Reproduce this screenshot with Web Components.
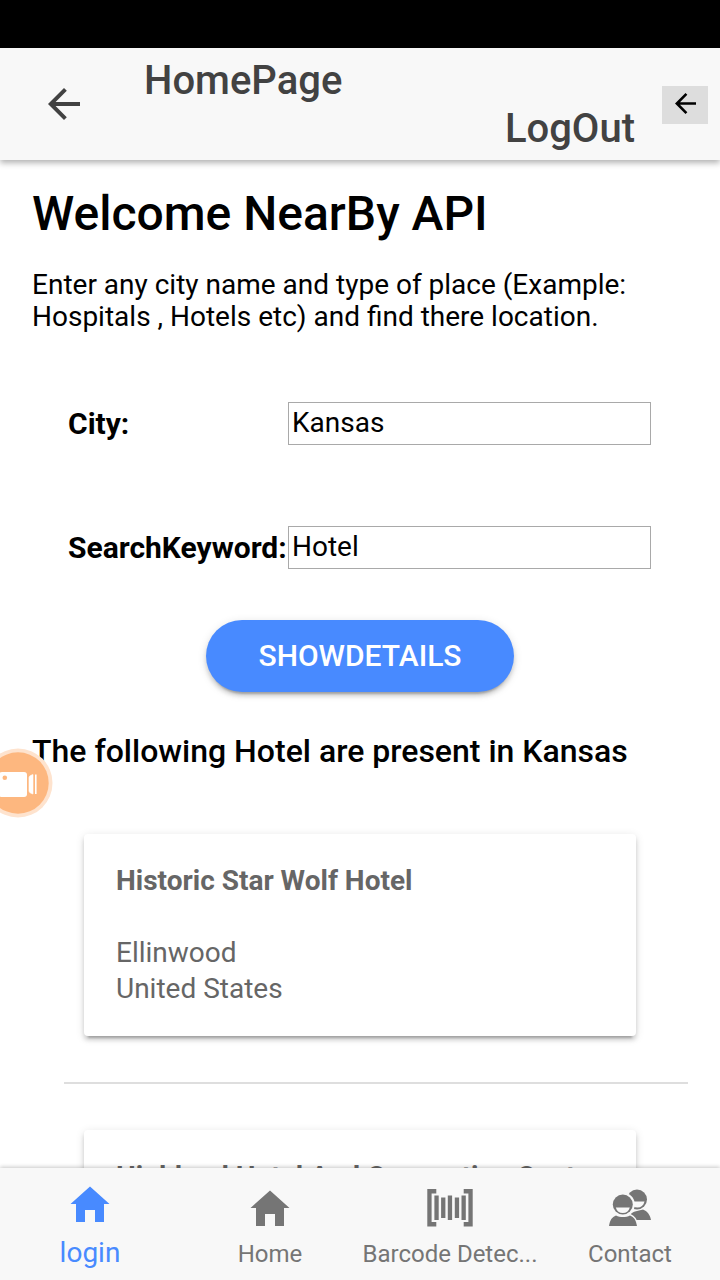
<!DOCTYPE html>
<html lang="en">
<head>
<meta charset="utf-8">
<title>HomePage</title>
<style>
html,body{margin:0;background:#fff}
body{font-family:Roboto,"Noto Sans",sans-serif;font-size:28px;color:#000;width:720px;height:1280px;overflow:hidden}
</style>
</head>
<body>
<near-app></near-app>
<script>
const define = (name, html, setup) => {
  const t = document.createElement('template');
  t.innerHTML = html;
  customElements.define(name, class extends HTMLElement {
    constructor(){
      super();
      this.attachShadow({mode:'open'}).appendChild(t.content.cloneNode(true));
    }
    connectedCallback(){ if (setup) setup(this, this.shadowRoot); }
  });
};

define('arrow-icon', `<style>:host{display:block;width:32px;height:32px}svg{display:block;width:100%;height:100%}</style>
<svg viewBox="0 0 32 32" fill="currentColor"><path d="M32 14H7.6L18.8 2.8 16 0 0 16l16 16 2.8-2.8L7.6 18H32z"/></svg>`);

define('app-header', `<style>
:host{display:flex;height:112px;background:#f8f8f8;color:#424242;align-items:center;box-sizing:border-box;padding:0 12px 0 48px;position:relative;z-index:2;box-shadow:0 3px 6px rgba(0,0,0,.3)}
.title{flex:1;margin:2px 27px 0 64px;font-size:40px;font-weight:500;line-height:48px}
.out{text-align:right}
button{border:0;padding:0;width:46px;height:38px;background:#ddd;display:grid;place-items:center;color:#000;margin-top:2px}
button arrow-icon{width:21px;height:21px;margin-bottom:3px}
</style>
<arrow-icon></arrow-icon>
<div class="title"><div>HomePage</div><div class="out">LogOut</div></div>
<button aria-label="Log out"><arrow-icon></arrow-icon></button>`);

define('form-field', `<style>
:host{display:flex;height:43px;align-items:center}
label{width:220px;font-size:30px;font-weight:700;line-height:43px;white-space:nowrap}
.box{box-sizing:border-box;width:363px;height:43px;border:1px solid #a9a9a9;padding:0 3px;line-height:39px;background:#fff}
</style><label><slot name="label"></slot></label><div class="box"><slot></slot></div>`);

define('pill-button', `<style>
:host{display:block}
button{display:block;width:308px;height:72px;margin:0 auto;border:0;border-radius:36px;background:#488aff;color:#fff;font:500 30px/72px Roboto,sans-serif;padding:0;box-shadow:0 4px 4px rgba(0,0,0,.14),0 6px 2px -4px rgba(0,0,0,.2),0 2px 10px rgba(0,0,0,.12)}
</style><button><slot></slot></button>`);

define('hotel-card', `<style>
:host{display:block;box-sizing:border-box;width:552px;height:202px;border-radius:4px;background:#fff;padding:29px 32px 0;color:#666;line-height:36px;box-shadow:0 4px 4px rgba(0,0,0,.14),0 6px 2px -4px rgba(0,0,0,.2),0 2px 10px rgba(0,0,0,.12);white-space:nowrap}
b{display:block;margin-bottom:36px}
</style><b><slot name="name"></slot></b><slot></slot>`);

define('record-bubble', `<style>
:host{position:absolute;left:-17px;top:748px;width:70px;height:70px;z-index:3}
svg{display:block}</style>
<svg width="70" height="70" viewBox="0 0 70 70"><circle cx="35" cy="35" r="34.5" fill="#fee3ce"/><circle cx="35" cy="35" r="30.7" fill="#fdb77f"/><rect x="16" y="24" width="28" height="25" rx="3" fill="#fff"/><circle cx="21.8" cy="29.7" r="2.3" fill="#fdb77f"/><path d="M46 29.5q.3-1.500 1.500-2l2.500-1v19.500l-2.500-1q-1.200-.5-1.500-2z" fill="#fff" stroke="#fff" stroke-width=".6" stroke-linejoin="round"/><path d="M52.8 26.500v19.500" stroke="#fff" stroke-width="1.600"/></svg>`);

define('tab-item', `<style>
:host{display:flex;flex-direction:column;align-items:center;width:180px;color:#757575;font-size:24px;padding-top:15px;box-sizing:border-box}
:host([selected]){color:#488aff;font-size:28px;padding-top:11px}
.icon{display:block;width:48px;height:48px}
span{line-height:28px;margin-top:9px;white-space:nowrap}
:host([selected]) span{margin-top:12px}
svg{display:block}
</style><div class="icon"></div><span><slot></slot></span>`, (el, root) => {
  const icons = {
    home:'<path d="M10 43h9V31h10v12h9V25h5.500L24 7.500 4.500 25H10z"/>',
    barcode:'<path d="M1.300 6h9v4.500H5.600v28.500h4.700v4.500h-9zM46.700 6h-9v4.500h4.700v28.500h-4.700v4.500h9zM8.400 12.500h4.300v24.500H8.400zM15.100 14.500h4.300v20.500h-4.300zM21.800 12.500h4.300v24.500h-4.300zM28.800 14.500h4.300v20.500h-4.300zM35.500 12.500h4.300v24.500h-4.300z"/>',
    contacts:'<circle cx="31" cy="16.500" r="10"/><path d="M24.500 18.500h14c-1 4-3.500 6-7 6s-6-2-7-6z" fill="#f8f8f8"/><path d="M22 37c1-5 3-7 7-8.500l8-2c4 1.500 7 5 8 10.500z"/><circle cx="16.800" cy="21.500" r="12" fill="#f8f8f8"/><circle cx="16.800" cy="21.500" r="10"/><path d="M9.800 24.500h14c-1 3.800-3.500 5.500-7 5.500s-6-1.700-7-5.500z" fill="#f8f8f8"/><path d="M3 43c1-6 3-9 7-10.500 4 2 10 2 14 0 4 1.500 6 4.500 7 10.500z" stroke="#f8f8f8" stroke-width="3" paint-order="stroke"/>'
  };
  root.querySelector('.icon').innerHTML = '<svg width="48" height="48" viewBox="0 0 48 48" fill="currentColor">' + icons[el.getAttribute('icon')] + '</svg>';
});

define('tab-bar', `<style>:host{display:flex;flex:none;height:112px;background:#f8f8f8;position:relative;z-index:2;box-shadow:0 -1px 4px rgba(0,0,0,.22)}</style><slot></slot>`);

define('near-app', `<style>
:host{display:flex;flex-direction:column;width:720px;height:1280px;position:relative;overflow:hidden}
.status{height:48px;background:#000;flex:none}
app-header{flex:none}
main{flex:1;min-height:0;overflow:hidden;padding:26px 32px 0}
h1{font-size:48px;font-weight:500;line-height:56px;margin:0 0 27px}
p{margin:0;line-height:32px;white-space:nowrap}
form-field{margin-left:36px}
.first{margin-top:69px;margin-bottom:81px}
pill-button{margin-top:51px}
h2{font-size:32px;font-weight:500;line-height:38px;margin:40px 0 64px}
hotel-card{margin-left:52px}
hr{border:0;height:2px;background:#dedede;margin:46px 0 46px 32px;width:624px}
</style>
<div class="status"></div>
<app-header></app-header>
<main>
<h1>Welcome NearBy API</h1>
<p>Enter any city name and type of place (Example:<br>Hospitals , Hotels etc) and find there location.</p>
<form-field class="first"><span slot="label">City:</span>Kansas</form-field>
<form-field><span slot="label">SearchKeyword:</span>Hotel</form-field>
<pill-button>SHOWDETAILS</pill-button>
<h2>The following Hotel are present in Kansas</h2>
<hotel-card><span slot="name">Historic Star Wolf Hotel</span>Ellinwood<br>United States</hotel-card>
<hr>
<hotel-card><span slot="name">Highland Hotel And Convention Center</span></hotel-card>
</main>
<tab-bar><tab-item icon="home" selected>login</tab-item><tab-item icon="home">Home</tab-item><tab-item icon="barcode">Barcode Detec...</tab-item><tab-item icon="contacts">Contact</tab-item></tab-bar>
<record-bubble></record-bubble>`);
</script>
</body>
</html>
